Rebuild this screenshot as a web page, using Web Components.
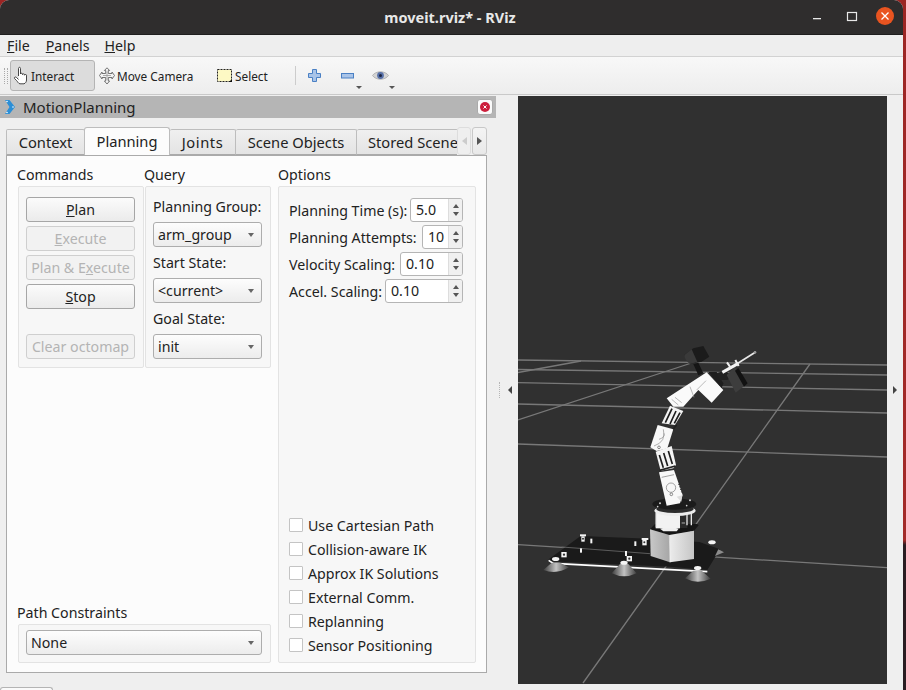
<!DOCTYPE html>
<html><head><meta charset="utf-8">
<style>
html,body{margin:0;padding:0;height:100%;overflow:hidden}
body{width:906px;height:690px;background:linear-gradient(#9c2524 0,#a32a28 540px,#2a1d22 545px);font-family:"Noto Sans","Liberation Sans",sans-serif;font-size:14px;color:#222}
</style></head><body>
<rv-window>
  <rv-titlebar slot="title">moveit.rviz* - RViz</rv-titlebar>
  <rv-menubar slot="menu"></rv-menubar>
  <rv-toolbar slot="tools"></rv-toolbar>
  <rv-dock slot="dock" title-text="MotionPlanning">
    <rv-tabs>
      <rv-planning></rv-planning>
    </rv-tabs>
  </rv-dock>
  <rv-splitter slot="split" side="left"></rv-splitter>
  <rv-viewport slot="view"></rv-viewport>
  <rv-splitter slot="rsplit" side="right"></rv-splitter>
</rv-window>
<script>
function def(name, css, html, init){
  customElements.define(name, class extends HTMLElement{
    constructor(){super();const s=this.attachShadow({mode:'open'});s.innerHTML='<style>'+css+'</style>'+html;}
    connectedCallback(){ if(init && !this._i){this._i=1;init.call(this,this.shadowRoot);} }
  });
}

def('rv-window',`
:host{display:flex;flex-direction:column;width:903px;height:690px;background:#efefef;border-radius:9px 9px 0 0;overflow:hidden}
.main{flex:1;display:flex;min-height:0;padding-top:1px}
.tail{height:6px;flex:none;background:#efefef;position:relative}
.chip{display:block;width:51px;height:3px;margin-top:3px;background:#fafafa;border:1px solid #b4b4b4;border-bottom:0;border-radius:3px 3px 0 0}
`,`<slot name="title"></slot><slot name="menu"></slot><slot name="tools"></slot>
<div class="main"><slot name="dock"></slot><slot name="split"></slot><slot name="view"></slot><slot name="rsplit"></slot></div>
<div class="tail"><span class="chip"></span></div>`);

def('rv-titlebar',`
:host{display:block;height:35px;flex:none;background:#2f2d2d;position:relative;color:#e8e8e8;font:700 14.5px/34px "Noto Sans",sans-serif;text-align:center;box-sizing:border-box;border-bottom:1px solid #1f1e1e}
.t{display:block;width:900px}
.c{position:absolute;top:0;right:0;height:34px;display:flex;align-items:center}
svg{display:block}
`,`<span class="t"><slot></slot></span>
<div class="c"><svg width="90" height="34" viewBox="813 0 90 34">
<rect x="813" y="18" width="8" height="1.300" fill="#e8e8e8"/>
<rect x="847.500" y="12.500" width="9" height="8" fill="none" stroke="#e8e8e8" stroke-width="1.200"/>
<circle cx="885" cy="16" r="9" fill="#e95420"/>
<path d="M881.500 12.500l7 7M888.500 12.500l-7 7" stroke="#fff" stroke-width="1.300" fill="none"/>
</svg></div>`);

def('rv-menubar',`
:host{display:flex;flex:none;height:21px;background:#eee;border-bottom:1px solid #d2d2d2;padding-left:7px;gap:15px;font:14.2px/21px "Noto Sans",sans-serif;color:#222}
span:first-child{margin-right:2px}
span:nth-child(2){margin-right:1px}
`,`<span><u>F</u>ile</span><span><u>P</u>anels</span><span><u>H</u>elp</span>`);

def('rv-toolbar',`
:host{display:flex;flex:none;align-items:center;height:38px;box-sizing:border-box;border-bottom:1px solid #c9c9c9;background:linear-gradient(#f8f8f8,#ededed);font:11.8px "Noto Sans",sans-serif;color:#222;position:relative}
.grip{height:16px;margin:0 3px 0 4px;border-left:1px dotted #aaa;border-right:1px dotted #aaa;width:2px}
.b{display:flex;align-items:center;height:31px;box-sizing:border-box;flex:none}
.on{width:85px;background:#dcdcdc;border:1px solid #b4b4b4;border-radius:3px;padding-left:2px;gap:1px;margin-left:-1px}
.mv{width:122px;padding-left:4px;gap:2px}
.sl{width:78px;gap:3px}
.sep{width:1px;height:19px;background:#ccc;margin:0 2px 0 0;flex:none}
.ic{width:33px;display:flex;justify-content:center;position:relative;height:31px;align-items:center;flex:none}
.ar{position:absolute;right:2px;bottom:2px;width:0;height:0;border:3px solid transparent;border-top:3px solid #555;border-bottom:0}
svg{display:block;flex:none}
`,`<span class="grip"></span>
<div class="b on"><svg width="17" height="19" viewBox="0 0 17 19"><path d="M5.500 10V2.500c0-1.600 2-1.600 2 0v5.500c0-1 2-1 2 0v.6c0-1 2-1 2 0v.6c0-.9 2-.9 2 0V14c0 2-1 3-2.500 3.800H7C5.500 17.800 5 16 3.500 14.500L1.500 12.500C1 11 2.500 10.500 3.500 11.500L5.500 13.500" fill="#fff" stroke="#333" stroke-width=".9" stroke-linejoin="round"/></svg><span>Interact</span></div>
<div class="b mv"><svg width="16" height="18" viewBox="0 0 16 18"><path d="M8 .8L10.600 3.500H9.300V6.500H13V5L15.500 8.500L13 12V10.500H9.300V14H10.600L8 17L5.400 14H6.700V10.500H3V12L.5 8.500L3 5V6.500H6.700V3.500H5.400Z" fill="#f3f3f3" stroke="#666" stroke-width=".9"/><path d="M4 8.500H12M8 4.500V13" stroke="#999" stroke-width=".8"/></svg><span>Move Camera</span></div>
<div class="b sl"><svg width="15" height="13" viewBox="0 0 15 13"><rect x=".5" y=".5" width="14" height="12" fill="#fdf9c4" stroke="#222" stroke-dasharray="2 1"/><path d="M15 10v3h-3z" fill="#111"/></svg><span>Select</span></div>
<span class="sep"></span>
<div class="ic"><svg width="13" height="13" viewBox="0 0 13 13"><path d="M4.500.5h4v4h4v4h-4v4h-4v-4h-4v-4h4z" fill="#a9c4e8" stroke="#4a80c4"/></svg></div>
<div class="ic"><svg width="13" height="6" viewBox="0 0 13 6"><rect x=".5" y=".5" width="12" height="4.500" fill="#a9c4e8" stroke="#4a80c4"/></svg><i class="ar"></i></div>
<div class="ic"><svg width="17" height="11" viewBox="0 0 17 11"><path d="M.5 5.500C4 .5 13 .5 16.500 5.500C13 10.500 4 10.500 .5 5.500Z" fill="#d4d4d4" stroke="#aaa" stroke-width=".8"/><circle cx="8.500" cy="5.500" r="3.400" fill="#5770a8"/><circle cx="8.500" cy="5.500" r="1.500" fill="#1c2540"/></svg><i class="ar"></i></div>`);

def('rv-dock',`
:host{display:flex;flex-direction:column;width:496px;flex:none;box-sizing:border-box}
.h{height:22px;flex:none;background:#b5b5b5;display:flex;align-items:center;padding-left:5px;gap:8px;font:15px "Noto Sans",sans-serif;color:#222}
.x{margin-left:auto;margin-right:3px;width:16px;height:16px;background:#fafafa;border:1px solid #aaa;border-radius:3px;box-sizing:border-box;display:flex;align-items:center;justify-content:center}
.body{flex:1;min-height:0;padding:9px 9px 11px 6px;display:flex;flex-direction:column}
svg{display:block}
`,`<div class="h"><svg width="10" height="16" viewBox="0 0 10 16"><path d="M0 1H4.500L10 8L4.500 15H0L4.500 8Z" fill="#2c8fd6"/><circle cx="2" cy="2.500" r=".8" fill="#fff"/><circle cx="8" cy="8" r=".8" fill="#fff"/><circle cx="2" cy="13.500" r=".8" fill="#fff"/></svg><span id="t"></span>
<span class="x"><svg width="10" height="10" viewBox="0 0 10 10"><circle cx="5" cy="5" r="5" fill="#cc1f3c"/><path d="M3.500 3.500l3 3M6.500 3.500l-3 3" stroke="#fff" stroke-width="1"/></svg></span></div>
<div class="body"><slot></slot></div>`,function(s){s.getElementById('t').textContent=this.getAttribute('title-text');});

def('rv-tabs',`
:host{display:flex;flex-direction:column;flex:1;min-height:0}
.bar{display:flex;height:28px;flex:none;position:relative;z-index:1}
.strip{display:flex;width:451px;overflow:hidden;align-items:flex-end}
.tab{flex:none;height:26px;box-sizing:border-box;background:linear-gradient(#f0f0f0,#e4e4e4);border:1px solid #bdbdbd;border-bottom:1px solid #aaa;border-left:0;border-radius:2px 2px 0 0;font:14.7px/25px "Noto Sans",sans-serif;text-align:center;color:#222;white-space:nowrap}
.tab:first-child{border-left:1px solid #bdbdbd}
.sel{height:28px;line-height:26px;background:#fcfcfc;border-color:#bdbdbd;border-bottom:0;border-left:1px solid #bdbdbd;margin-left:-1px;border-radius:3px 3px 0 0}
.scr{width:15px;height:28px;box-sizing:border-box;border:1px solid #c8c8c8;border-radius:3px;background:linear-gradient(#f4f4f4,#e9e9e9);display:flex;align-items:center;justify-content:center;flex:none}
.scr+.scr{margin-left:1px}
.l{width:14px;background:#efefef;border-color:#ddd}
.w{width:0;height:0;border:4px solid transparent;border-left:0;border-right:5px solid #ccc}
.e{width:0;height:0;border:4px solid transparent;border-right:0;border-left:5px solid #555}
.panel{flex:1;min-height:0;background:#fcfcfc;border:1px solid #aaa;display:flex;flex-direction:column}
`,`<div class="bar"><div class="strip">
<div class="tab" style="width:79px">Context</div>
<div class="tab sel" style="width:86px">Planning</div>
<div class="tab" style="width:66px;letter-spacing:.6px">Joints</div>
<div class="tab" style="width:121px">Scene Objects</div>
<div class="tab" style="width:101px;text-align:left;padding-left:11px;border-right:0">Stored Scene</div>
</div><div class="scr l"><i class="w"></i></div><div class="scr"><i class="e"></i></div></div>
<div class="panel"><slot></slot></div>`);

def('rv-button',`
:host{display:block;width:109px;height:25px;flex:none;box-sizing:border-box;border:1px solid #a6a6a6;border-radius:3px;background:linear-gradient(#fbfbfb,#ebebeb);font:14.2px/23px "Noto Sans",sans-serif;text-align:center;color:#222;white-space:nowrap;overflow:hidden}
:host([disabled]){color:#b4b4b4;border-color:#cfcfcf;background:#f2f2f2}
`,`<slot></slot>`);

def('rv-combo',`
:host{display:flex;align-items:center;justify-content:space-between;height:25px;flex:none;box-sizing:border-box;border:1px solid #adadad;border-radius:3px;background:linear-gradient(#fdfdfd,#ececec);font:14.2px/23px "Noto Sans",sans-serif;padding:0 7px 0 4px;color:#222}
i{width:0;height:0;border:3.500px solid transparent;border-top:4px solid #666;border-bottom:0}
`,`<span><slot></slot></span><i></i>`);

def('rv-spin',`
:host{display:flex;height:24px;box-sizing:border-box;border:1px solid #b5b5b5;border-radius:3px;background:#fff;font:14.2px/22px "Noto Sans",sans-serif;color:#222;flex:none;overflow:hidden}
.v{flex:1;padding-left:5px}
.b{width:13px;border-left:1px solid #ddd;background:#f0f0f0;display:flex;flex-direction:column;align-items:center;justify-content:center;gap:4px}
.u{width:0;height:0;border:3.500px solid transparent;border-top:0;border-bottom:4px solid #555}
.d{width:0;height:0;border:3.500px solid transparent;border-bottom:0;border-top:4px solid #555}
`,`<span class="v"><slot></slot></span><span class="b"><i class="u"></i><i class="d"></i></span>`);

def('rv-check',`
:host{display:flex;align-items:center;height:24px;gap:5px;font:14.2px "Noto Sans",sans-serif;color:#222}
i{width:14px;height:14px;box-sizing:border-box;background:#fff;border:1px solid #c4c4c4;border-radius:1px;flex:none}
`,`<i></i><span><slot></slot></span>`);

def('rv-box',`
:host{display:flex;flex-direction:column;box-sizing:border-box;background:#f7f7f7;border:1px solid #e3e3e3;border-radius:2px}
`,`<slot></slot>`);

def('rv-planning',`
:host{display:grid;grid-template-columns:253px 198px;column-gap:7px;flex:1;min-height:0;padding:10px 0 9px 11px;font:14.2px/17px "Noto Sans",sans-serif;color:#222}
.left,.right{display:flex;flex-direction:column;min-height:0}
.top{display:flex;gap:1px}
.col{width:126px}
.lab{height:17px;margin:0 0 3px -1px;white-space:nowrap}
.right .lab{margin-left:0}
.cmd{height:182px;padding:10px 7px 0 7px;gap:4px}
.gap{height:17px;flex:none}
.qry{height:182px;padding:12px 8px 0 7px}
.qry span{display:block;height:15px;line-height:15px;margin-bottom:8px;white-space:nowrap}
.qry rv-combo{margin-bottom:8px}
.fill{flex:1}
.pc{height:39px;padding:5px 8px 0 7px}
.opt{flex:1;padding:11px 12px 5px 10px}
.row{display:flex;align-items:center;justify-content:space-between;height:24px;margin-bottom:3px;white-space:nowrap}
.checks{margin-top:auto}
`,`<div class="left">
 <div class="top">
  <div class="col"><div class="lab">Commands</div>
   <rv-box class="cmd">
    <rv-button><u>P</u>lan</rv-button>
    <rv-button disabled><u>E</u>xecute</rv-button>
    <rv-button disabled>Plan &amp; E<u>x</u>ecute</rv-button>
    <rv-button><u>S</u>top</rv-button>
    <div class="gap"></div>
    <rv-button disabled>Clear octomap</rv-button>
   </rv-box></div>
  <div class="col"><div class="lab">Query</div>
   <rv-box class="qry">
    <span>Planning Group:</span><rv-combo>arm_group</rv-combo>
    <span>Start State:</span><rv-combo>&lt;current&gt;</rv-combo>
    <span>Goal State:</span><rv-combo>init</rv-combo>
   </rv-box></div>
 </div>
 <div class="fill"></div>
 <div class="lab">Path Constraints</div>
 <rv-box class="pc"><rv-combo>None</rv-combo></rv-box>
</div>
<div class="right"><div class="lab">Options</div>
 <rv-box class="opt">
  <div class="row"><span>Planning Time (s):</span><rv-spin style="width:53px">5.0</rv-spin></div>
  <div class="row"><span>Planning Attempts:</span><rv-spin style="width:41px">10</rv-spin></div>
  <div class="row"><span>Velocity Scaling:</span><rv-spin style="width:63px">0.10</rv-spin></div>
  <div class="row"><span>Accel. Scaling:</span><rv-spin style="width:78px">0.10</rv-spin></div>
  <div class="checks">
   <rv-check>Use Cartesian Path</rv-check>
   <rv-check>Collision-aware IK</rv-check>
   <rv-check>Approx IK Solutions</rv-check>
   <rv-check>External Comm.</rv-check>
   <rv-check>Replanning</rv-check>
   <rv-check>Sensor Positioning</rv-check>
  </div>
 </rv-box>
</div>`);

def('rv-splitter',`
:host{display:flex;align-items:center;box-sizing:border-box;flex:none;width:22px}
:host([side=right]){width:16px;padding-left:6px}
.dots{width:0;height:16px;border-left:1px dotted #b5b5b5;margin:0 8px 0 3px}
.al{width:0;height:0;border:4px solid transparent;border-left:0;border-right:4px solid #444}
.ar{width:0;height:0;border:4px solid transparent;border-right:0;border-left:4px solid #444}
`,`<span id="h" style="display:contents"></span>`,function(s){
  s.getElementById('h').innerHTML=this.getAttribute('side')==='left'?'<i class="dots"></i><i class="al"></i>':'<i class="ar"></i>';
});

def('rv-viewport',`
:host{display:block;width:369px;height:588px;flex:none;background:#303030}
svg{display:block}
`,`<svg width="369" height="588" viewBox="518 96 369 588">
<defs>
<linearGradient id="cone" x1="0" x2="1" y1="0" y2="0"><stop offset="0" stop-color="#3c3c3c"/><stop offset=".5" stop-color="#c2c2c2"/><stop offset="1" stop-color="#3c3c3c"/></linearGradient>
<linearGradient id="fl" x1="0" x2="1" y1="0" y2="0"><stop offset="0" stop-color="#c8c8c8"/><stop offset="1" stop-color="#a6a6a6"/></linearGradient>
<linearGradient id="fr" x1="0" x2="1" y1="0" y2="0"><stop offset="0" stop-color="#ececec"/><stop offset="1" stop-color="#c6c6c6"/></linearGradient>
</defs>
<g stroke="#787878" stroke-width="1.300" fill="none">
<path d="M518 360L887 365M518 369.500L887 375M518 382.700L887 390M518 404L887 413M518 444L887 457M518 544.700L887 567.700"/>
<path d="M518 372.500L581 361M518 420L690 363.500M583 683L810 364"/>
</g>
<g transform="translate(490 340) scale(.33333)">
<path d="M272 588L480 596L628 606L690 628L652 690L540 680L180 664L176 658Z" fill="#1a1a1a"/>
<path d="M176 661L190 670L652 695" stroke="#fff" stroke-width="5" fill="none"/>
<path d="M215 621L480 641" stroke="#5c5c5c" stroke-width="3" fill="none"/>
<path d="M185 668L210 668L237 682Q200 705 160 690Z" fill="url(#cone)"/>
<path d="M390 672L415 672L440 700Q402 718 365 700Z" fill="url(#cone)"/>
<path d="M610 692L635 692L662 716Q622 735 585 715Z" fill="url(#cone)"/>
<path d="M685 628L702 637L675 648Z" fill="#8c8c8c"/>
<g fill="#f4f4f4">
<ellipse cx="197" cy="657" rx="11" ry="6"/><ellipse cx="402" cy="668" rx="11" ry="6"/><ellipse cx="623" cy="684" rx="11" ry="6"/><ellipse cx="666" cy="607" rx="11" ry="6"/>
<rect x="270" y="583" width="18" height="6"/><rect x="274" y="589" width="10" height="16"/>
<rect x="455" y="594" width="20" height="6"/><rect x="457" y="600" width="13" height="16"/>
<rect x="214" y="636" width="16" height="16"/><rect x="410" y="648" width="16" height="16"/>
<rect x="301" y="596" width="6" height="14"/><rect x="270" y="625" width="6" height="13"/><rect x="433" y="604" width="6" height="14"/><rect x="405" y="633" width="6" height="15"/>
</g>
<g fill="#333"><circle cx="279" cy="596" r="3"/><circle cx="463" cy="607" r="3"/><circle cx="222" cy="644" r="3.500"/><circle cx="418" cy="656" r="3.500"/></g>
<path d="M480 568L495 552H622L626 556L612 572L538 585Z" fill="#161616"/>
<path d="M510 566Q540 558 566 566L560 574H520Z" fill="#efefef"/>
<path d="M480 568L538 585L540 667L482 648Z" fill="url(#fl)"/>
<path d="M538 585L612 572L612 657L540 667Z" fill="url(#fr)"/>
<path d="M538 585L540 667" stroke="#f8f8f8" stroke-width="2"/>
<rect x="497" y="519" width="73" height="46" fill="#f2f2f2"/>
<rect x="570" y="522" width="22" height="42" fill="#2a2a2a"/>
<path d="M575 549H585" stroke="#eee" stroke-width="2"/>
<path d="M499 512V562M604 512V556M591 514V556" stroke="#e8e8e8" stroke-width="4"/>
<ellipse cx="555" cy="512" rx="62" ry="16" fill="#ececec"/>
<ellipse cx="555" cy="507" rx="56" ry="12" fill="#2c2c2c"/>
<ellipse cx="553" cy="492" rx="66" ry="17" fill="#1b1b1b"/>
<g fill="#cfcfcf"><circle cx="510" cy="490" r="3"/><circle cx="600" cy="481" r="3"/><circle cx="590" cy="497" r="2.500"/><circle cx="503" cy="500" r="2.500"/></g>
<path d="M507 397L552 390L578 465L570 490L530 497Z" fill="#f8f8f8"/>
<path d="M515 412L552 404" stroke="#777" stroke-width="2"/>
<circle cx="543" cy="443" r="14" fill="none" stroke="#777" stroke-width="2"/>
<circle cx="544" cy="463" r="4" fill="none" stroke="#555" stroke-width="2"/>
<path d="M566 432L577 462" stroke="#222" stroke-width="3" stroke-dasharray="3 5"/>
<path d="M560 470L577 466L574 485Z" fill="#ddd"/>
<path d="M497 335L545 318L558 375L550 385L512 392Z" fill="#f4f4f4"/>
<path d="M508 345L520 383M521 339L533 378M535 333L547 372" stroke="#1e1e1e" stroke-width="5"/>
<path d="M509 391L556 378" stroke="#222" stroke-width="5"/>
<path d="M481 322L503 255L550 268L532 325L500 333Z" fill="#f8f8f8"/>
<path d="M492 318Q530 305 520 268" fill="none" stroke="#888" stroke-width="2"/>
<path d="M507 298Q525 292 522 280" fill="none" stroke="#888" stroke-width="2"/>
<circle cx="507" cy="322" r="4" fill="none" stroke="#555" stroke-width="2"/>
<path d="M549 268L560 255" stroke="#222" stroke-width="5"/>
<path d="M515 250L540 197L580 213L555 255Z" fill="#f4f4f4"/>
<path d="M526 248L546 206M540 252L558 213M553 250L570 218" stroke="#1e1e1e" stroke-width="5"/>
<path d="M530 175L650 97L700 150L665 188L625 150L580 200L550 200Z" fill="#fafafa"/>
<path d="M600 140L612 172M545 178L565 195M555 172L575 188M620 150L648 122" stroke="#999" stroke-width="2"/>
<path d="M655 96L680 96L700 130L695 145Z" fill="#1e1e1e"/>
<path d="M610 72L625 106L640 100L625 68Z" fill="#151515"/>
<path d="M583 45L610 25L640 18L658 50L635 65L600 72Z" fill="#1b1b1b"/>
<path d="M583 45L605 28L622 66L600 72Q585 62 583 45Z" fill="#3a3a3a"/>
<path d="M680 100L702 92L730 105L712 120L690 120Z" fill="#202020"/>
<path d="M735 80L773 130L737 158L710 105Z" fill="#3d3d3d"/>
<path d="M745 84L773 130L762 140L735 92Z" fill="#121212"/>
<path d="M697 97L745 70" stroke="#f4f4f4" stroke-width="9"/>
<path d="M740 72L797 36" stroke="#e8e8e8" stroke-width="5"/>
<path d="M711 67L724 86M736 60L746 78" stroke="#efefef" stroke-width="6"/>
<circle cx="795" cy="37" r="4" fill="#999"/>
</g>
</svg>`);
</script>
</body></html>
